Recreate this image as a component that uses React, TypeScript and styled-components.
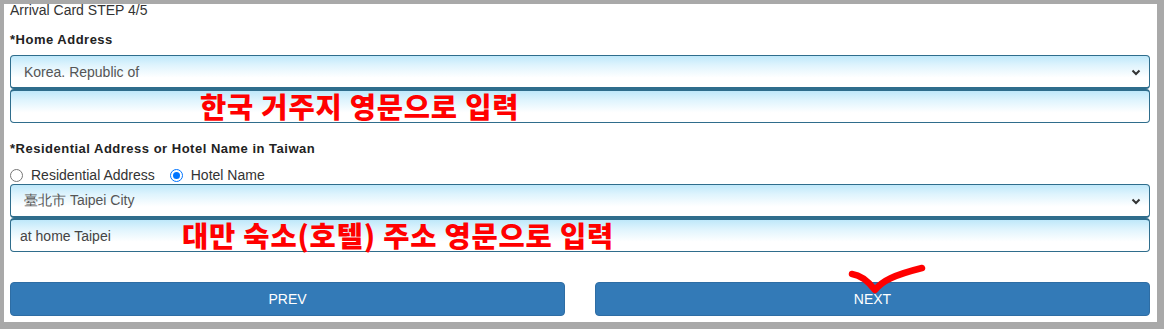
import * as React from "react";
import styled, { createGlobalStyle } from "styled-components";

const GlobalStyle = createGlobalStyle`
  html, body {
    margin: 0;
    padding: 0;
    background: #a9a9a9;
  }
`;

const Frame = styled.div`
  box-sizing: border-box;
  width: 1164px;
  height: 329px;
  overflow: hidden;
  border-style: solid;
  border-color: #a9a9a9;
  border-width: 4px 7px 7px 4px;
  background: #ffffff;
`;

const Form = styled.div`
  position: relative;
  padding: 0 7px 0 6px;
  display: flex;
  flex-direction: column;
  font-family: "Liberation Sans", Arial, sans-serif;
  color: #333333;
`;

const StepTitle = styled.div`
  margin-top: -2px;
  font-size: 14px;
  line-height: 16px;
  color: #333333;
`;

const Label = styled.div<{ $top: number }>`
  margin-top: ${(p) => p.$top}px;
  font-size: 13px;
  line-height: 16px;
  font-weight: 700;
  color: #222222;
  letter-spacing: 0.5px;
`;

const FieldGroup = styled.div<{ $top: number }>`
  position: relative;
  margin-top: ${(p) => p.$top}px;
  display: flex;
  flex-direction: column;
`;

const Field = styled.div`
  box-sizing: border-box;
  position: relative;
  height: 34px;
  display: flex;
  align-items: center;
  padding: 0 12px;
  border: 1px solid #2f6d8c;
  border-radius: 4px;
  background: linear-gradient(to bottom, #bfe8fa 0%, #dff4fd 30%, #ffffff 70%, #ffffff 100%);
  font-size: 14px;
  color: #555555;
`;

const SelectField = styled(Field)`
  padding-left: 13px;
  padding-right: 8px;
  justify-content: space-between;
  border-bottom-width: 2px;
`;

const InputField = styled(Field)`
  padding-left: 9px;
  border-top-width: 2px;
  color: #444444;
`;

const Chevron = styled.svg`
  width: 10px;
  height: 10px;
  color: #333333;
`;

const Note = styled.span<{ $left: number }>`
  position: absolute;
  left: ${(p) => p.$left}px;
  top: 51px;
  transform: translateY(-50%);
  font-family: "Noto Sans CJK KR", sans-serif;
  font-weight: 900;
  font-size: 28.5px;
  line-height: 1;
  color: #ff0000;
  letter-spacing: 0.8px;
  white-space: nowrap;
  pointer-events: none;
`;

const RadioRow = styled.div`
  margin-top: 10px;
  display: flex;
  align-items: center;
  gap: 15px;
  height: 16px;
  font-size: 14px;
  color: #333333;
`;

const RadioOption = styled.label`
  display: flex;
  align-items: center;
  gap: 8px;
`;

const RadioDot = styled.span<{ $checked?: boolean }>`
  box-sizing: border-box;
  width: 13px;
  height: 13px;
  border-radius: 50%;
  border: 1px solid ${(p) => (p.$checked ? "#0075ff" : "#767676")};
  background: #ffffff;
  display: flex;
  align-items: center;
  justify-content: center;

  &::after {
    content: "";
    display: ${(p) => (p.$checked ? "block" : "none")};
    width: 7px;
    height: 7px;
    border-radius: 50%;
    background: #0075ff;
  }
`;

const ButtonRow = styled.div`
  position: relative;
  margin-top: 30px;
  display: grid;
  grid-template-columns: 1fr 1fr;
  gap: 30px;
`;

const Button = styled.button`
  height: 34px;
  border: 1px solid #2e6da4;
  border-radius: 4px;
  background: #337ab7;
  color: #ffffff;
  font-family: "Liberation Sans", Arial, sans-serif;
  font-size: 14px;
  cursor: pointer;
`;

const CheckMark = styled.svg`
  position: absolute;
  left: 838px;
  top: -17px;
  width: 80px;
  height: 32px;
  overflow: visible;
`;

const ChevronIcon = () => (
  <Chevron viewBox="0 0 10 10">
    <path d="M1.5 3.5 L5 7 L8.5 3.5" fill="none" stroke="currentColor" strokeWidth="2" />
  </Chevron>
);

export default function App() {
  return (
    <>
      <GlobalStyle />
      <Frame>
        <Form>
          <StepTitle>Arrival Card STEP 4/5</StepTitle>

          <Label $top={14}>*Home Address</Label>
          <FieldGroup $top={7}>
            <SelectField>
              <span>Korea. Republic of</span>
              <ChevronIcon />
            </SelectField>
            <InputField />
            <Note $left={190}>한국 거주지 영문으로 입력</Note>
          </FieldGroup>

          <Label $top={18}>*Residential Address or Hotel Name in Taiwan</Label>
          <RadioRow>
            <RadioOption>
              <RadioDot />
              Residential Address
            </RadioOption>
            <RadioOption>
              <RadioDot $checked />
              Hotel Name
            </RadioOption>
          </RadioRow>
          <FieldGroup $top={1}>
            <SelectField>
              <span>臺北市 Taipei City</span>
              <ChevronIcon />
            </SelectField>
            <InputField>at home Taipei</InputField>
            <Note $left={172}>대만 숙소(호텔) 주소 영문으로 입력</Note>
          </FieldGroup>

          <ButtonRow>
            <Button>PREV</Button>
            <Button>NEXT</Button>
            <CheckMark viewBox="0 0 80 32">
              <path
                d="M4 9 C12 10 20 16 27 25 C34 16 46 10 74 3"
                fill="none"
                stroke="#ff0000"
                strokeWidth="6.5"
                strokeLinecap="round"
                strokeLinejoin="round"
              />
            </CheckMark>
          </ButtonRow>
        </Form>
      </Frame>
    </>
  );
}
